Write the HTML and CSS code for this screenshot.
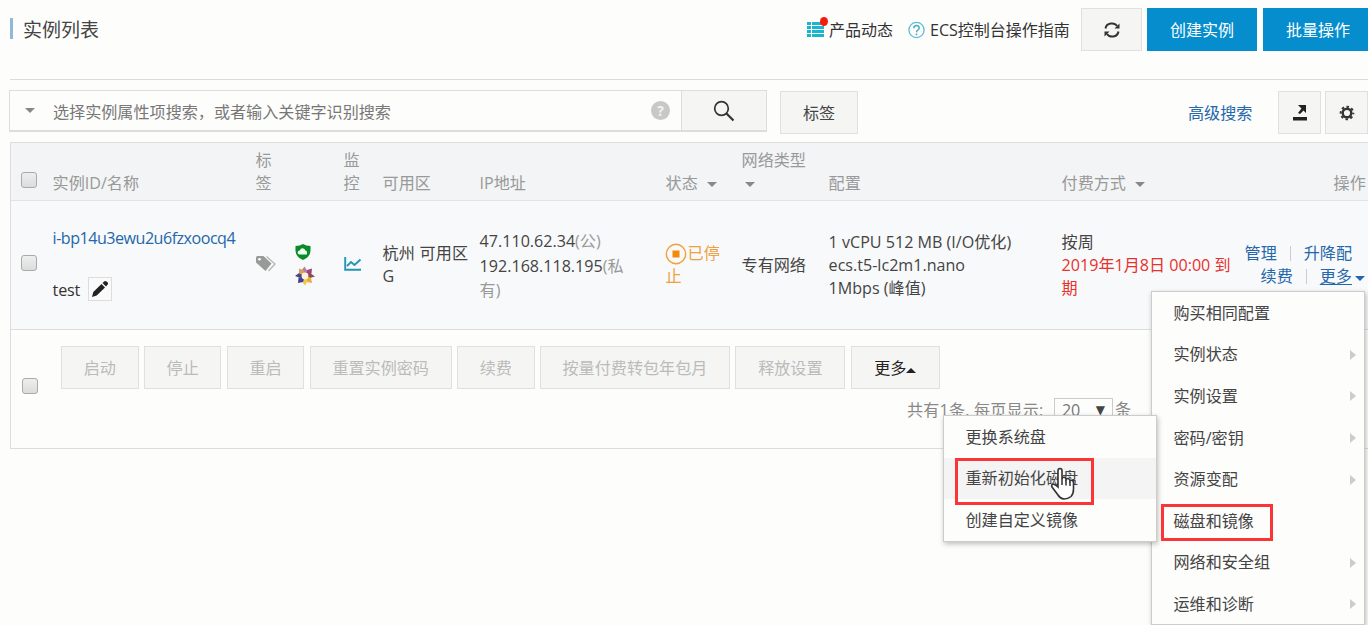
FILE: index.html
```html
<!DOCTYPE html>
<html lang="zh-CN">
<head>
<meta charset="utf-8">
<title>实例列表</title>
<link rel="stylesheet" href="styles.css">
</head>
<body>
<div class="page">
  <header class="topbar">
    <h1 class="title">实例列表</h1>
    <div class="top-actions">
      <a class="top-link news">
        <svg width="18" height="24" viewBox="0 0 18 24"><g fill="#1db4cf"><path d="M0 4h4v3H0zM5 4h12v3H5zM0 8h4v3H0zM5 8h12v3H5zM0 12h4v3H0zM5 12h12v3H5zM0 16h4v3H0zM5 16h12v3H5z"/></g></svg>
        <i class="red-dot"></i><span>产品动态</span>
      </a>
      <a class="top-link guide">
        <svg width="17" height="18" viewBox="0 0 17 18"><circle cx="8.500" cy="9" r="7.600" fill="none" stroke="#5bbdd0" stroke-width="1.300"/><path d="M5.800 7.200C5.800 3.500 11.200 3.700 11.200 6.900C11.200 9 8.500 9 8.500 11.200M8.500 12.600v1.700" fill="none" stroke="#48aabf" stroke-width="1.500"/></svg>
        <span>ECS控制台操作指南</span>
      </a>
      <button class="btn refresh"><svg width="18" height="20" viewBox="0 0 18 20"><path d="M2.500 8.500C3.500 2.500 11.500 2 14 6M15.500 11.500C14.500 17.500 6.500 18 4 14" fill="none" stroke="#333" stroke-width="2"/><path d="M16.500 3.500v5h-5zM1.500 16.500v-5h5z" fill="#333"/></svg></button>
      <button class="btn primary create">创建实例</button>
      <button class="btn primary batch">批量操作</button>
    </div>
  </header>

  <div class="toolbar">
    <div class="search">
      <i class="caret search-caret"></i>
      <span class="placeholder">选择实例属性项搜索，或者输入关键字识别搜索</span>
      <span class="help">?</span>
      <button class="search-btn"><svg width="24" height="24" viewBox="0 0 24 24"><circle cx="9.500" cy="9.500" r="6.800" fill="none" stroke="#333" stroke-width="1.700"/><path d="M14.500 14.500l7 7" stroke="#333" stroke-width="2.200"/></svg></button>
    </div>
    <button class="btn tag-btn">标签</button>
    <a class="advanced">高级搜索</a>
    <button class="btn square export"><svg width="18" height="20" viewBox="0 0 18 20"><path d="M2 14h14v3.500H2zM7 2h8v8l-2.500-2.500-3.500 3.500-2-1 3.500-4.500z" fill="#222"/></svg></button>
    <button class="btn square gear"><svg width="16" height="16" viewBox="0 0 16 16"><circle cx="8" cy="8" r="4.300" fill="none" stroke="#333" stroke-width="2.400"/><circle cx="8" cy="8" r="6.300" fill="none" stroke="#333" stroke-width="2" stroke-dasharray="2.500 2.448" stroke-dashoffset="1.250"/></svg></button>
  </div>

  <main class="table">
    <div class="grid head">
      <div><i class="check"></i></div>
      <div>实例ID/名称</div>
      <div class="narrow">标签</div>
      <div></div>
      <div class="narrow">监控</div>
      <div>可用区</div>
      <div>IP地址</div>
      <div>状态<i class="caret gap"></i></div>
      <div>网络类型<br><i class="caret under"></i></div>
      <div>配置</div>
      <div>付费方式<i class="caret gap"></i></div>
      <div class="last">操作</div>
    </div>

    <div class="grid row">
      <div><i class="check"></i></div>
      <div class="name">
        <a class="id">i-bp14u3ewu2u6fzxoocq4</a>
        <div class="alias"><span>test</span><button class="edit"><svg width="18" height="18" viewBox="0 0 18 18"><path d="M1 17l1.300-5L10.500 4l3.500 3.500-8.300 8zM11.500 3l2-1.800q1-.7 2 .2l1.200 1.200q.9 1 0 2L15 6.500z" fill="#222"/></svg></button></div>
      </div>
      <div class="tag-cell"><svg width="22" height="18" viewBox="0 0 22 18"><path d="M0 2.500Q0 1 1.500 1H7.500l8 7.500-6 7.500L0 7.500z" fill="#999"/><circle cx="3.500" cy="4.300" r="1.300" fill="#fff"/><path d="M10.500 1.500L19 9l-6.500 7" fill="none" stroke="#b5b5b5" stroke-width="1.300"/></svg></div>
      <div class="guard">
        <svg width="16" height="16" viewBox="0 0 16 16"><path d="M8 0Q11 2 15.500 2V7Q15 13 8 16Q1 13 .5 7V2Q5 2 8 0z" fill="#0b8a28"/><path d="M4.500 10.500a2 2 0 0 1 .2-4Q6 3.500 8.500 4.500q1.500.5 1.800 2q2.500.3 1.500 4z" fill="#e9fff0"/></svg>
        <svg width="20" height="20" viewBox="0 0 20 20"><path d="M10 10L6.500 4.500 9.500 0.500l2.500 4z" fill="#b77bab"/><path d="M10 10l2-6 5-1.500-.5 5z" fill="#9c467b"/><path d="M10 10l5-3 5 3.500-5 1.500z" fill="#8b4b59"/><path d="M10 10l6 2 1 5-5-1z" fill="#e9ae38"/><path d="M10 10l2 6-2 3.500-3-4z" fill="#f3c93e"/><path d="M10 10l-2 6-5 1 .5-5z" fill="#3f3f98"/><path d="M10 10l-5 2-5-2 4-3z" fill="#49477c"/><path d="M10 10L4 7V2.500l5 2z" fill="#d7a05a"/><circle cx="10" cy="10" r="3.400" fill="#fff1d8"/></svg>
      </div>
      <div class="monitor"><svg width="18" height="15" viewBox="0 0 18 15"><path d="M1.200 0v12.800H17M3 9l4-4 3.500 3L16.500 2.500" fill="none" stroke="#2394b5" stroke-width="1.900"/></svg></div>
      <div class="zone">杭州 可用区<br>G</div>
      <div class="ip"><span class="ip1">47.110.62.34<em>(公)</em></span><br><span class="ip2">192.168.118.195<em>(私</em></span><br><em>有)</em></div>
      <div class="status"><svg width="22" height="22" viewBox="0 0 22 22"><circle cx="11" cy="11" r="9.700" fill="none" stroke="#f4a03a" stroke-width="1.400"/><path d="M7.500 7.500h7v7h-7z" fill="#f48a08"/></svg>已停<br>止</div>
      <div class="net">专有网络</div>
      <div class="conf"><span class="c1">1 vCPU 512 MB (I/O优化)</span><br><span class="c2">ecs.t5-lc2m1.nano</span><br><span class="c3">1Mbps (峰值)</span></div>
      <div class="pay">按周<br><span class="due">2019年1月8日 00:00 到</span><br><span class="due2">期</span></div>
      <div class="ops">
        <div class="op-line"><a>管理</a><i class="sep"></i><a>升降配</a></div>
        <div class="op-line second"><a>续费</a><i class="sep"></i><a class="more">更多</a><i class="caret blue"></i></div>
      </div>
    </div>

    <div class="foot">
      <i class="check"></i>
      <div class="foot-body">
        <div class="bulk">
          <button class="btn off">启动</button><button class="btn off">停止</button><button class="btn off">重启</button><button class="btn off w4">重置实例密码</button><button class="btn off">续费</button><button class="btn off w5">按量付费转包年包月</button><button class="btn off w6">释放设置</button><button class="btn w7">更多<i class="caret up"></i></button>
        </div>
        <div class="pager"><span class="count">共有1条, 每页显示:</span><span class="select">20<i>▼</i></span><span>条</span></div>
      </div>
    </div>
  </main>

  <nav class="menu main-menu">
    <a>购买相同配置</a>
    <a>实例状态<i class="arrow"></i></a>
    <a>实例设置<i class="arrow"></i></a>
    <a>密码/密钥<i class="arrow"></i></a>
    <a>资源变配<i class="arrow"></i></a>
    <a>磁盘和镜像</a>
    <a>网络和安全组<i class="arrow"></i></a>
    <a>运维和诊断<i class="arrow"></i></a>
  </nav>
  <nav class="menu sub-menu">
    <a>更换系统盘</a>
    <a class="hover">重新初始化磁盘</a>
    <a>创建自定义镜像</a>
  </nav>
  <div class="mark mark-disk"></div>
  <div class="mark mark-image"></div>
  <svg class="cursor" width="26" height="34" viewBox="0 0 26 34"><path d="M8 20V4Q8 1.500 10 1.500T12 4V12Q12.500 10 14.200 10.300T16 12.500Q17 11 18.600 11.700T20 14Q21.200 12.800 22.400 13.500T23.500 16V22Q23.500 27 21 29.500Q18 32 14 32Q10 31.500 8 28L2 20Q1 18 2.800 17.300T8 20z" fill="#fff" stroke="#333" stroke-width="1.600"/><path d="M12 12v6M16 13v5.500M20 14.500v4.500" stroke="#333" stroke-width="1.500"/></svg>
</div>
</body>
</html>
```
FILE: styles.css
```css
* { box-sizing: border-box; }
body { margin: 0; background: #fdfdfc; }
.page {
  position: relative;
  width: 1368px;
  height: 625px;
  overflow: hidden;
  font: 16.1px/23px "Open Sans", "Noto Sans CJK SC", sans-serif;
  color: #444;
  white-space: nowrap;
}
i, em { font-style: normal; }
svg { display: block; flex: none; }
a { color: #2467ab; }
button { font: inherit; color: inherit; padding: 0; margin: 0; }

.topbar {
  display: flex;
  justify-content: space-between;
  height: 80px;
  margin-left: 10px;
  border-bottom: 1px solid #dcdcdc;
}
.title {
  margin: 18px 0 0;
  height: 21px;
  padding-left: 10px;
  border-left: 3px solid #92b7dc;
  font-size: 19px;
  line-height: 24px;
  font-weight: 400;
}
.top-actions { display: flex; padding-top: 8px; }
.top-link { position: relative; display: flex; align-items: center; height: 43px; color: #333; font-size: 16px; }
.top-link span { padding-top: 1px; }
.news { width: 101px; gap: 4px; }
.red-dot { position: absolute; left: 13px; top: 9px; width: 8px; height: 9px; border-radius: 50%; background: #f51b0a; }
.guide { width: 173px; gap: 5px; }
.btn {
  display: flex;
  flex: none;
  align-items: center;
  justify-content: center;
  height: 43px;
  padding-top: 1px;
  background: #f5f5f4;
  border: 1px solid #e0e0e0;
}
.refresh { width: 61px; margin-right: 5px; padding: 0; }
.primary { background: #058dcd; border-color: #058dcd; color: #fff; font-size: 16px; }
.create { width: 110px; margin-right: 6px; }
.batch { width: 110px; margin-right: -5px; }

.toolbar { display: flex; align-items: flex-start; height: 62px; padding: 10px 0 0 9px; }
.search {
  display: flex;
  flex: none;
  align-items: center;
  width: 758px;
  height: 42px;
  border: 1px solid #ddd;
  border-bottom-width: 2px;
  color: #777;
}
.caret {
  display: inline-block;
  border: 5px solid transparent;
  border-top-color: #888;
  border-bottom: 0;
}
.search-caret { margin-left: 15px; }
.placeholder { flex: none; width: 614px; padding: 3px 0 0 18px; }
.help { flex: none; width: 19px; height: 19px; border-radius: 50%; background: #c8c8c8; color: #f3f3f3; font-size: 14px; line-height: 19px; text-align: center; font-weight: 700; margin-left: 2px; }
.search-btn {
  display: flex;
  align-items: center;
  justify-content: center;
  flex: 1;
  height: 39px;
  margin-left: 11px;
  border: 0;
  border-left: 1px solid #ddd;
  background: #f5f5f4;
}
.tag-btn { width: 78px; margin: 1px 0 0 13px; }
.advanced { margin: 12px 0 0 330px; }
.square { margin-top: 1px; padding: 0; }
.export { width: 43px; margin-left: 26px; }
.gear { width: 43px; margin-left: 4px; }

.table { margin-left: 10px; border: 1px solid #ddd; border-right: 0; height: 307px; }
.grid { display: grid; grid-template-columns: 41.600px 203px 39px 49px 39px 97px 186px 76px 87px 233px 171px 136px; }
.head { height: 58px; align-items: end; padding-bottom: 5px; background: #f2f4f5; border-bottom: 1px solid #e0e2e3; color: #999; }
.check {
  display: block;
  width: 16px;
  height: 16px;
  margin-left: 10px;
  border: 1px solid #aaa;
  border-radius: 3px;
  background: linear-gradient(#eee, #dcdcdc);
}
.head .check { margin-bottom: 7px; }
.narrow { width: 17px; white-space: normal; word-break: break-all; }
.gap { margin: 0 0 2px 9px; }
.under { margin: 0 0 2px 3px; }
.last { padding-left: 101px; }

.row { height: 129px; background: #f8f9fa; border-bottom: 1px solid #ddd; }
.row .check { margin-top: 54px; }
.name { padding-top: 26px; }
.id { display: block; height: 23px; letter-spacing: -.5px; }
.alias { display: flex; gap: 8px; align-items: center; height: 24px; margin-top: 27px; color: #333; letter-spacing: -.2px; }
.alias span { padding-top: 2px; }
.edit { display: flex; align-items: center; justify-content: center; width: 24px; height: 24px; border: 1px solid #ddd; background: #fafafa; }
.tag-cell { padding-top: 54px; }
.guard { display: grid; justify-items: start; align-content: start; gap: 6px; padding-top: 43px; }
.monitor { padding-top: 56px; }
.zone { padding-top: 41px; letter-spacing: .15px; }
.ip { padding-top: 28px; line-height: 24.600px; }
.ip em { color: #999; }
.status { padding-top: 41px; color: #f0a03c; }
.status svg { display: inline-block; vertical-align: -5px; margin: -2px 1px -1px -1px; }
.net { padding-top: 53px; }
.conf, .pay { padding-top: 30px; }
.due, .due2 { color: #e8302c; }
.ops { padding: 41px 0 0 12px; }
.op-line { display: flex; align-items: center; height: 23px; }
.second { padding-left: 16px; }
.sep { width: 1px; height: 15px; margin: 0 13px; background: #ccc; }
.more { text-decoration: underline; text-underline-offset: 2px; }
.blue { margin: 3px 0 0 3px; border-top-color: #2467ab; }

.foot { display: flex; }
.foot .check { margin: 48px 0 0 11px; }
.foot-body { width: 1080px; margin-left: 23px; padding-top: 16px; }
.bulk { display: flex; gap: 5.400px; }
.bulk .btn { width: 77.500px; padding-top: 2px; }
.off { color: #bbb; }
.bulk .w4 { width: 142px; }
.bulk .w5 { width: 190px; }
.bulk .w6 { width: 110px; }
.bulk .w7 { width: 89px; color: #222; }
.up { border: 5px solid transparent; border-bottom-color: #222; border-top: 0; margin-top: 4px; }
.pager { display: flex; justify-content: flex-end; padding: 9px 10px 0 0; color: #888; }
.count { width: 147px; padding-top: 1px; letter-spacing: .2px; }
.select { display: flex; justify-content: space-between; width: 59px; height: 25px; padding: 0 7px; margin-right: 2px; border: 1px solid #ccc; color: #777; }
.select i { font-size: 12px; color: #444; line-height: 22px; font-family: "DejaVu Sans", sans-serif; }

/* floating menus sit over the table */
.menu { position: absolute; background: #fdfdfc; border: 1px solid #ccc; box-shadow: 1px 2px 5px rgba(0, 0, 0, .25); color: #333; }
.menu a { display: flex; align-items: center; justify-content: space-between; height: 41.600px; padding: 1px 8px 0 21.500px; color: #444; }
.main-menu { left: 1151px; top: 291px; width: 214px; height: 334px; }
.sub-menu { left: 943px; top: 415px; width: 214px; height: 127px; }
.menu .hover { background: #f4f4f4; }
.arrow { border: 5px solid transparent; border-left: 6px solid #ccc; border-right: 0; }
.mark { position: absolute; border: 3px solid #fb3438; }
.mark-disk { left: 955px; top: 458px; width: 139px; height: 47px; }
.mark-image { left: 1161px; top: 504px; width: 112px; height: 37px; }
.cursor { position: absolute; left: 1050px; top: 467px; }
```
